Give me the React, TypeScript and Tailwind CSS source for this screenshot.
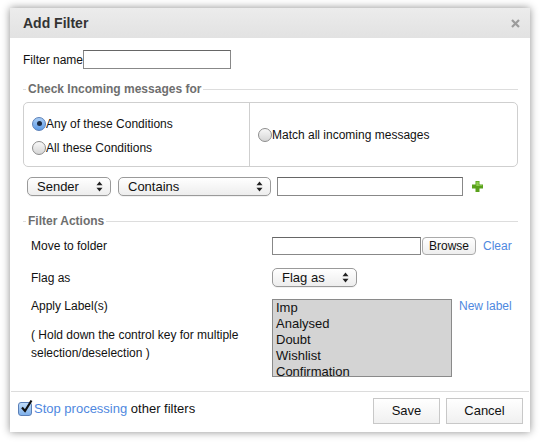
import React from 'react';

const Arrows: React.FC = () => (
  <svg width="7" height="11" viewBox="0 0 7 11" className="shrink-0">
    <path d="M3.5 0.5 L6.5 4.2 H0.5 Z" fill="#222" />
    <path d="M3.5 10.5 L6.5 6.8 H0.5 Z" fill="#222" />
  </svg>
);

const FakeSelect: React.FC<{ label: string; w: string }> = ({ label, w }) => (
  <div className={`${w} h-[19px] flex items-center justify-between pl-[9px] pr-[7px] rounded-[5px] border border-[#9a9a9a] bg-gradient-to-b from-white to-[#ededed] text-[13px] text-[#111] shadow-[0_1px_0_rgba(0,0,0,0.05)]`}>
    <span>{label}</span>
    <Arrows />
  </div>
);

const Radio: React.FC<{ checked?: boolean }> = ({ checked }) =>
  checked ? (
    <span className="w-[14px] h-[14px] rounded-full border border-[#5a7fb8] bg-gradient-to-b from-[#a9cdf5] to-[#5d9be6] flex items-center justify-center shrink-0">
      <span className="w-[5px] h-[5px] rounded-full bg-[#1b2b44]" />
    </span>
  ) : (
    <span className="w-[14px] h-[14px] rounded-full border border-[#8d8d8d] bg-gradient-to-b from-[#f8f8f8] to-[#d6d6d6] shrink-0" />
  );

const SectionTitle: React.FC<{ title: string }> = ({ title }) => (
  <div className="flex items-center h-[12px]">
    <div className="w-[3px] h-px bg-[#ddd]" />
    <span className="px-[2px] text-[12px] font-bold text-[#6e6e6e] leading-none">{title}</span>
    <div className="flex-1 h-px bg-[#ddd]" />
  </div>
);

export default function App() {
  return (
    <div className="w-[540px] h-[442px] bg-white pt-[8px] pl-[10px]" style={{ fontFamily: '"Liberation Sans", Arial, sans-serif' }}>
      <div className="w-[520px] h-[424px] bg-white shadow-[0_0_8px_rgba(0,0,0,0.45)] flex flex-col">
        {/* header */}
        <div className="h-[30px] flex items-center justify-between pl-[13px] pr-[10px] bg-gradient-to-b from-[#ececec] to-[#e2e2e2]">
          <span className="text-[14px] font-bold text-[#333]">Add Filter</span>
          <svg width="9" height="9" viewBox="0 0 9 9">
            <path d="M1 1 L8 8 M8 1 L1 8" stroke="#9c9c9c" strokeWidth="2.2" />
          </svg>
        </div>

        <div className="pl-[13px] pr-[12px] flex flex-col">
          {/* filter name */}
          <div className="mt-[12px] flex items-center h-[19px] text-[12px] text-[#111]">
            <span>Filter name</span>
            <div className="w-[148px] h-[19px] border border-[#888] border-t-[#666] bg-white" />
          </div>

          <div className="mt-[14px]">
            <SectionTitle title="Check Incoming messages for" />
          </div>

          {/* conditions box */}
          <div className="mt-[7px] h-[65px] border border-[#cfcfcf] rounded-[5px] flex text-[12px] text-[#111]">
            <div className="w-[226px] border-r border-[#cfcfcf] flex flex-col justify-center gap-[6px] pl-[8px] pt-[2px]">
              <label className="flex items-center leading-[18px]">
                <Radio checked />
                <span>Any of these Conditions</span>
              </label>
              <label className="flex items-center leading-[18px]">
                <Radio />
                <span>All these Conditions</span>
              </label>
            </div>
            <div className="flex-1 flex items-center pl-[8px]">
              <label className="flex items-center">
                <Radio />
                <span>Match all incoming messages</span>
              </label>
            </div>
          </div>

          {/* condition row */}
          <div className="mt-[10px] flex items-center pl-[4px]">
            <FakeSelect label="Sender" w="w-[84px]" />
            <div className="w-[7px]" />
            <FakeSelect label="Contains" w="w-[153px]" />
            <div className="ml-[6px] w-[186px] h-[19px] border border-[#888] border-t-[#666] bg-white" />
            <svg width="11" height="11" viewBox="0 0 11 11" className="ml-[9px]">
              <path d="M3.5 0 H7.5 V3.5 H11 V7.5 H7.5 V11 H3.5 V7.5 H0 V3.5 H3.5 Z" fill="#5aa11c" />
              <path d="M4.3 0.8 H6.7 V4.3 H10.2 V5 H4.3 Z" fill="#8fcf4f" />
            </svg>
          </div>

          <div className="mt-[19px]">
            <SectionTitle title="Filter Actions" />
          </div>

          {/* actions */}
          <div className="pl-[8px] text-[12px] text-[#111]">
            <div className="mt-[10px] flex items-center h-[18px]">
              <span className="w-[241px]">Move to folder</span>
              <div className="w-[149px] h-[18px] border border-[#888] border-t-[#666] bg-white" />
              <div className="ml-[1px] w-[54px] h-[18px] rounded-[4px] border border-[#aaa] bg-gradient-to-b from-white to-[#eeeeee] flex items-center justify-center text-[12px] text-[#111]">Browse</div>
              <span className="ml-[7px] text-[12px] text-[#4f88e0]">Clear</span>
            </div>

            <div className="mt-[13px] flex items-center h-[19px]">
              <span className="w-[241px]">Flag as</span>
              <FakeSelect label="Flag as" w="w-[85px]" />
            </div>

            <div className="mt-[12px] flex">
              <div className="w-[241px] flex flex-col">
                <span className="leading-[14px]">Apply Label(s)</span>
                <span className="mt-[13px] leading-[18px]">( Hold down the control key for multiple selection/deselection )</span>
              </div>
              <div className="w-[180px] h-[78px] border border-[#8a8a8a] bg-[#d4d4d4] pl-[3px] text-[13px] leading-[16px] text-[#111]">
                <div>Imp</div>
                <div>Analysed</div>
                <div>Doubt</div>
                <div>Wishlist</div>
                <div>Confirmation</div>
              </div>
              <span className="ml-[7px] text-[12px] text-[#4f88e0] leading-[14px]">New label</span>
            </div>
          </div>
        </div>

        {/* footer */}
        <div className="mt-[14px] mx-[1px] h-px bg-[#dcdcdc]" />
        <div className="flex items-center justify-between pt-[6px] pl-[8px] pr-[7px]">
          <label className="flex items-center text-[13px] mt-[-4px]">
            <span className="w-[14px] h-[14px] rounded-[3px] border border-[#5a7fb8] bg-gradient-to-b from-[#c0dcf8] to-[#7fb0ea] relative mr-[2px]">
              <svg width="14" height="15" viewBox="0 0 14 15" className="absolute left-[1px] top-[-4px]">
                <path d="M2 8.5 L5 12 L11.5 1.5" stroke="#111" strokeWidth="2.2" fill="none" />
              </svg>
            </span>
            <span className="text-[#4f88e0]">Stop processing</span>
            <span className="text-[#111]">&nbsp;other filters</span>
          </label>
          <div className="flex gap-[6px]">
            <div className="w-[67px] h-[26px] border border-[#c8c8c8] bg-gradient-to-b from-white to-[#f0f0f0] flex items-center justify-center text-[13px] text-[#111]">Save</div>
            <div className="w-[77px] h-[26px] border border-[#c8c8c8] bg-gradient-to-b from-white to-[#f0f0f0] flex items-center justify-center text-[13px] text-[#111]">Cancel</div>
          </div>
        </div>
      </div>
    </div>
  );
}
